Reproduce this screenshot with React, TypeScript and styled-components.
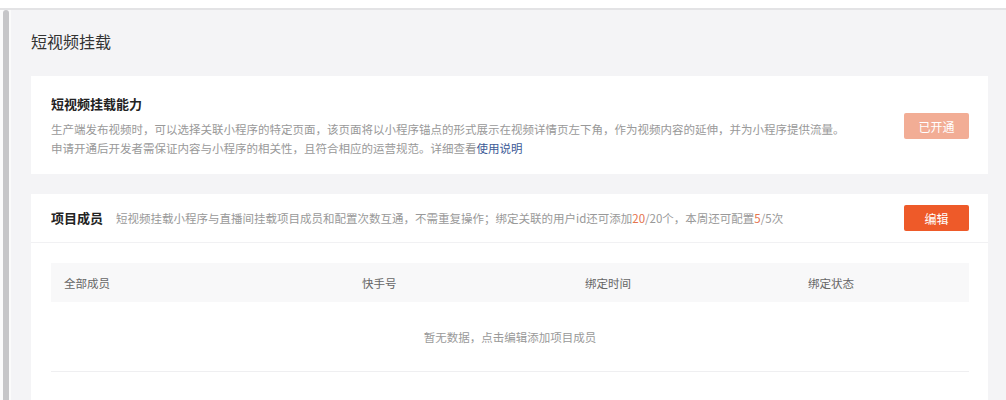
import * as React from 'react'
import styled, { createGlobalStyle } from 'styled-components'

const GlobalStyle = createGlobalStyle`
  html, body {
    margin: 0;
    padding: 0;
    background: #ffffff;
    font-family: "Noto Sans CJK SC", "Noto Sans", sans-serif;
  }
`

const Frame = styled.div`
  display: flex;
  margin-top: 8px;
  border-top: 2px solid #e3e3e5;
  height: 390px;
  overflow: hidden;
`

const Rail = styled.div`
  width: 11px;
  flex: none;
  padding-left: 3px;
  box-sizing: border-box;
  background: #fbfbfb;
`

const RailThumb = styled.div`
  width: 6px;
  height: 100%;
  background: #c6c6c8;
  border-radius: 3px 3px 0 0;
`

const Main = styled.main`
  flex: 1;
  background: #f4f4f6;
  padding: 19px 18px 0 20px;
`

const PageTitle = styled.h1`
  margin: 0 0 23px;
  font-size: 16px;
  line-height: 24px;
  font-weight: 400;
  color: #333;
`

const Card = styled.section`
  background: #fff;
  margin-bottom: 20px;
`

const FeatureCard = styled(Card)`
  display: flex;
  align-items: center;
  justify-content: space-between;
  padding: 18px 19px 16px 20px;
`

const CardTitle = styled.h2`
  margin: 0;
  font-size: 13px;
  line-height: 20px;
  font-weight: 700;
  color: #222;
  white-space: nowrap;
`

const Desc = styled.p`
  margin: 6px 0 0;
  font-size: 11.5px;
  line-height: 19px;
  color: #999;
`

const DocLink = styled.a`
  color: #3d5a96;
  text-decoration: none;
`

const Button = styled.button<{ $disabled?: boolean }>`
  width: 65px;
  height: 26px;
  flex: none;
  border: none;
  border-radius: 2px;
  background: ${p => (p.$disabled ? '#f2ad95' : '#ee5a29')};
  color: #fff;
  font-family: inherit;
  font-size: 12px;
  cursor: ${p => (p.$disabled ? 'default' : 'pointer')};
`

const MemberHeader = styled.div`
  display: flex;
  align-items: center;
  height: 48px;
  padding: 0 19px 0 20px;
  border-bottom: 1px solid #f1f1f3;
`

const HeaderDesc = styled.span`
  flex: 1;
  margin-left: 13px;
  font-size: 11.5px;
  color: #999;
  white-space: nowrap;
`

const Hl = styled.span`
  color: #e4734d;
`

const TableWrap = styled.div`
  padding: 20px 19px 40px 20px;
`

const Row = styled.div`
  display: grid;
  grid-template-columns: 298px 223px 223px 1fr;
  height: 39px;
  align-items: center;
  background: #f8f8f9;
`

const Th = styled.div`
  padding-left: 13px;
  font-size: 11.5px;
  color: #666;
`

const Empty = styled.div`
  height: 69px;
  display: flex;
  align-items: center;
  justify-content: center;
  border-bottom: 1px solid #efeff1;
  font-size: 11.5px;
  color: #999;
`

export default function App() {
  return (
    <>
      <GlobalStyle />
      <Frame>
        <Rail>
          <RailThumb />
        </Rail>
        <Main>
          <PageTitle>短视频挂载</PageTitle>
          <FeatureCard>
            <div>
              <CardTitle>短视频挂载能力</CardTitle>
              <Desc>
                生产端发布视频时，可以选择关联小程序的特定页面，该页面将以小程序锚点的形式展示在视频详情页左下角，作为视频内容的延伸，并为小程序提供流量。
                <br />
                申请开通后开发者需保证内容与小程序的相关性，且符合相应的运营规范。详细查看<DocLink href="#">使用说明</DocLink>
              </Desc>
            </div>
            <Button $disabled>已开通</Button>
          </FeatureCard>
          <Card>
            <MemberHeader>
              <CardTitle>项目成员</CardTitle>
              <HeaderDesc>
                短视频挂载小程序与直播间挂载项目成员和配置次数互通，不需重复操作；绑定关联的用户id还可添加<Hl>20</Hl>/20个，本周还可配置<Hl>5</Hl>/5次
              </HeaderDesc>
              <Button>编辑</Button>
            </MemberHeader>
            <TableWrap>
              <Row>
                <Th>全部成员</Th>
                <Th>快手号</Th>
                <Th>绑定时间</Th>
                <Th>绑定状态</Th>
              </Row>
              <Empty>暂无数据，点击编辑添加项目成员</Empty>
            </TableWrap>
          </Card>
        </Main>
      </Frame>
    </>
  )
}
